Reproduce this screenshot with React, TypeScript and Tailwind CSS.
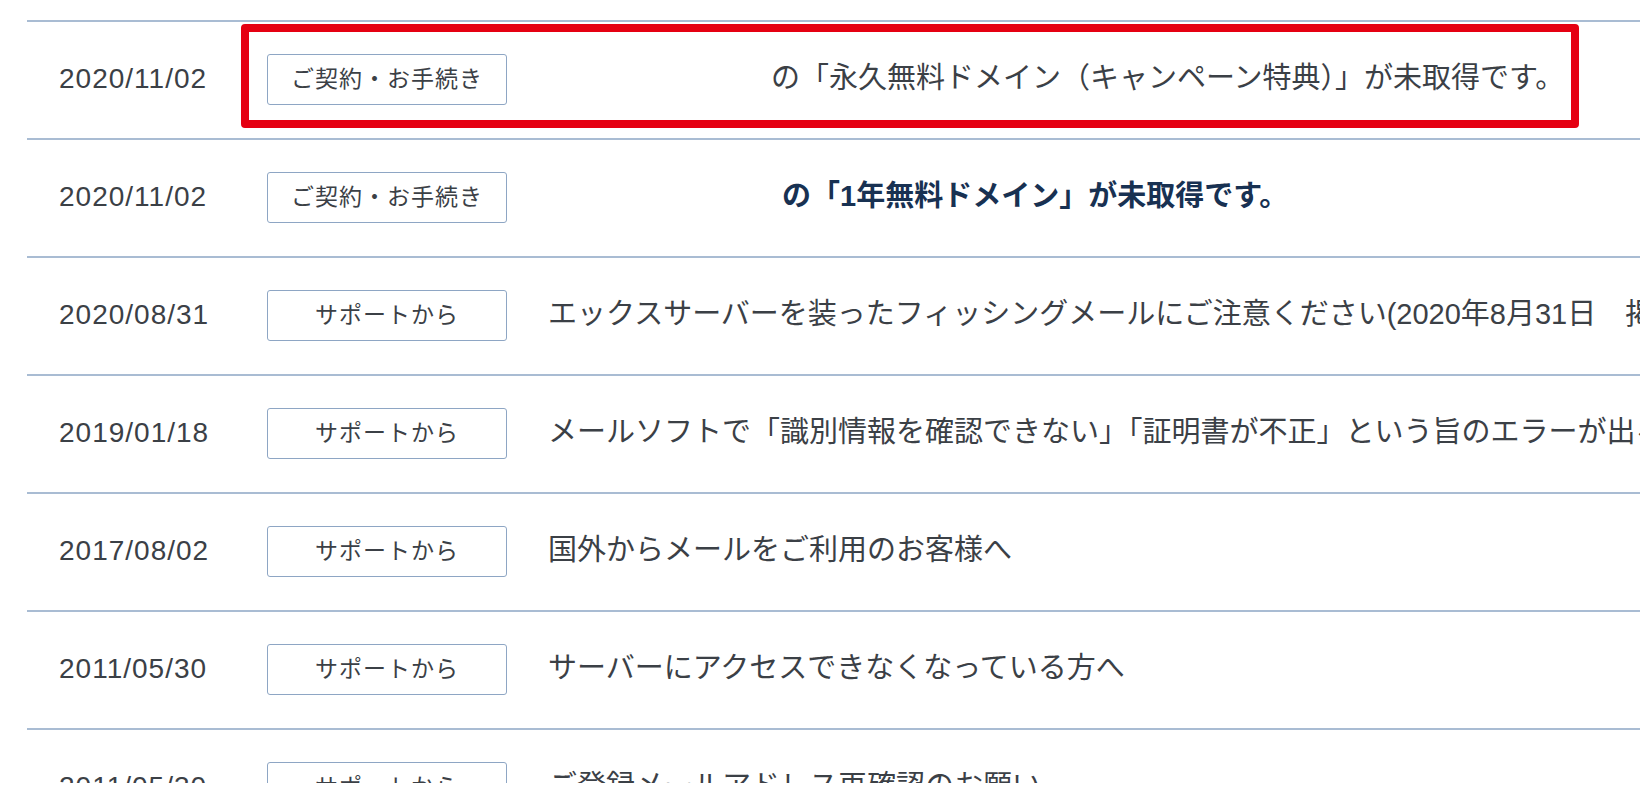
const rows = [
  { date: "2020/11/02", tag: "ご契約・お手続き", text: "の「永久無料ドメイン（キャンペーン特典）」が未取得です。", indent: "ml-[223px]", bold: false },
  { date: "2020/11/02", tag: "ご契約・お手続き", text: "の「1年無料ドメイン」が未取得です。", indent: "ml-[234px]", bold: true },
  { date: "2020/08/31", tag: "サポートから", text: "エックスサーバーを装ったフィッシングメールにご注意ください(2020年8月31日　掲載)", indent: "", bold: false },
  { date: "2019/01/18", tag: "サポートから", text: "メールソフトで「識別情報を確認できない」「証明書が不正」という旨のエラーが出る場合", indent: "", bold: false },
  { date: "2017/08/02", tag: "サポートから", text: "国外からメールをご利用のお客様へ", indent: "", bold: false },
  { date: "2011/05/30", tag: "サポートから", text: "サーバーにアクセスできなくなっている方へ", indent: "", bold: false },
  { date: "2011/05/30", tag: "サポートから", text: "ご登録メールアドレス再確認のお願い", indent: "", bold: false },
];

export default function App() {
  return (
    <div className="h-[802px] w-[1640px] bg-white font-['Liberation_Sans','Noto_Sans_CJK_JP',sans-serif] text-[#3b4046]">
      <div className="relative h-[783px] overflow-hidden pt-[20px] pl-[27px]">
        {rows.map((r, i) => (
          <div
            key={i}
            className="flex h-[118px] items-center border-t-2 border-[#a9bcd3] pb-[2px] whitespace-nowrap"
          >
            <div className="w-[240px] shrink-0 pl-[32px] text-[28px] tracking-[1px]">{r.date}</div>
            <div className="flex h-[51px] w-[240px] shrink-0 items-center justify-center rounded-[3px] border-[1.5px] border-[#8ea6c4] text-[23px] tracking-[1px]">
              {r.tag}
            </div>
            <div className="min-w-0 flex-1 overflow-hidden pl-[41px]">
              <div
                className={`text-[29px] ${r.indent} ${
                  r.bold ? "font-bold text-[#183152]" : ""
                }`}
              >
                {r.text}
              </div>
            </div>
          </div>
        ))}

        {/* red highlight annotation */}
        <div className="pointer-events-none absolute left-[241px] top-[24px] h-[104px] w-[1338px] rounded-[4px] border-[8px] border-[#e50012]" />
      </div>
    </div>
  );
}
